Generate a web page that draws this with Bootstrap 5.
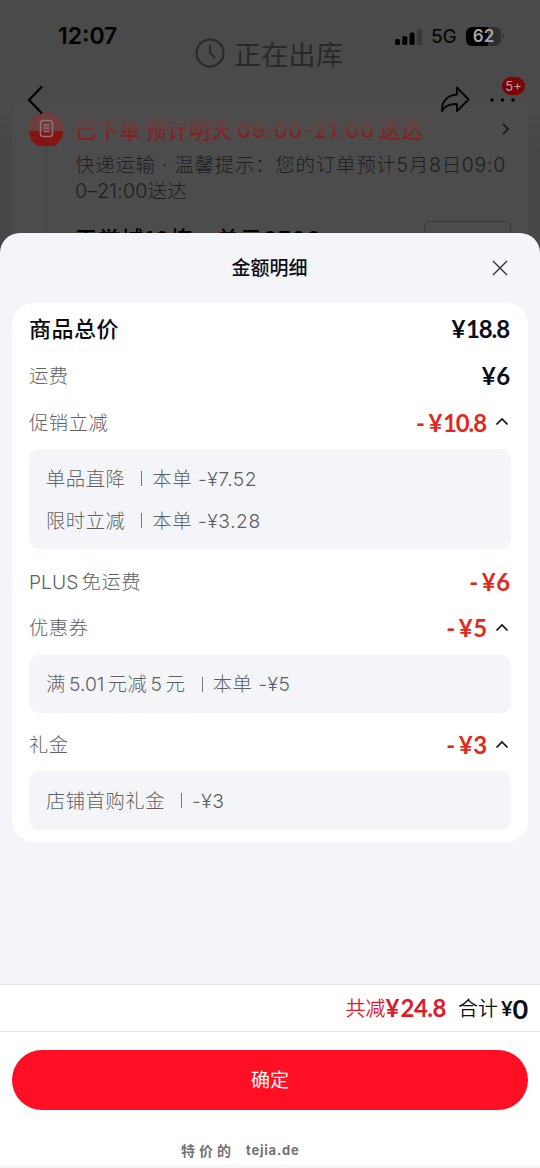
<!DOCTYPE html>
<html lang="zh-CN">
<head>
<meta charset="utf-8">
<meta name="viewport" content="width=device-width, initial-scale=1">
<title>金额明细</title>
<link href="https://cdn.jsdelivr.net/npm/bootstrap@5.3.0/dist/css/bootstrap.min.css" rel="stylesheet">
<style>
body{font-family:Inter,"Noto Sans CJK SC",sans-serif;background:#4a4a4a;color:#0b0e16;overflow:hidden}
svg{display:block;flex:none}
.screen{width:540px;height:1168px}
.t{white-space:pre;line-height:1}
.behind{height:260px;background:linear-gradient(#4a4a4a 110px,#464646 150px);overflow:hidden}
.over{z-index:2}
.clock{left:58px;top:25px;font-size:23px;font-weight:600;color:#000}
.signals{left:395px;top:26px;height:20px}
.net{font-size:19px;font-weight:500;color:#0a0a0a;margin-left:9px;width:27px;letter-spacing:-.3px}
.battery{width:35px;height:19px;border-radius:6px;background:linear-gradient(90deg,#000 64%,#303030 64%);color:#a5a5a5;font-size:17px;font-weight:600;margin-left:8px;line-height:19px}
.state{left:195px;top:38px;color:#292929;font-size:27px;font-weight:400;letter-spacing:.3px}
.state .t{padding-top:3px}
.count{left:502px;top:77px;width:23px;height:18px;background:#7d0004;color:#aaa;font-size:13px;line-height:18px}
.order{margin:97px 12px 0;height:163px;background:#4c4c4c;border-radius:16px 16px 0 0;padding:15px 16px 0 17px}
.track{width:1px;height:90px;background:#434343;margin:0 auto}
.ship{font-size:21.5px;height:34px;line-height:36px;background:linear-gradient(#703c3e 0 40%,#8a1c1f 66%);-webkit-background-clip:text;background-clip:text;color:transparent;font-weight:500;word-spacing:-2px;letter-spacing:.35px}
.ship .han{letter-spacing:.4px}
.ship .hours{letter-spacing:1px}
.info{font-size:19.5px;line-height:26px;color:#1e1e1e;font-weight:300;letter-spacing:.7px;margin-top:6px}
.info .next{letter-spacing:.2px}
.addr{font-size:22px;font-weight:500;color:#000;line-height:24px;margin-top:23px;letter-spacing:1.2px}
.choice{width:87px;height:36px;border:1px solid #383838;border-radius:6px;right:17px;top:124px}
.sheet{height:935px;margin-top:-27px;background:#f3f5f9;border-radius:20px 20px 0 0;z-index:3;overflow:hidden}
.head{height:70px;font-size:19px;font-weight:500}
.head .t{padding-top:1px;margin-right:1px}
.close-x{right:31px;top:26px}
.bill{margin:0 12px;height:539px;background:#fff;border-radius:22px;padding:0 17px}
.line{font-size:19.3px;color:#606163;font-weight:300;letter-spacing:.55px}
.line .t:not(.amt),.detail .t{padding-top:2px}
.latin{font-size:19.3px;letter-spacing:0}
.thin{letter-spacing:-2.2px}
.total{height:52px;font-size:22px;font-weight:500;color:#090b10;letter-spacing:.5px}
.amt{font-family:Lato,"Noto Sans CJK SC",sans-serif;font-weight:700;font-size:24px;letter-spacing:-1.1px;color:#0b0e18}
.amt:last-child{margin-right:2px}
.yen{margin-right:1.5px}
.off{color:#e22a1c}
.caret{margin-left:9px;margin-right:2px;margin-bottom:1px}
.detail{background:#f4f5f9;border-radius:10px;padding:0 17px;font-size:19.3px;letter-spacing:.55px;color:#606163;font-weight:300}
.detail .bar{width:1px;height:15px;background:#77787a;margin:0 10px 0 16px}
.h41{height:41px}.h42{height:41.5px}.h46{height:46px}.h52{height:52px}.h53{height:53px}
.one{height:58px}
.sum{height:48px;background:#fff;border-top:1px solid #e2e3e6;border-bottom:1px solid #e4e5e7;padding-right:11px}
.foot{height:136px;background:#fff;border-bottom:3px solid #f5f5f5;padding:18px 12px 0}
.ok{height:60px;background:#ff0f23;color:#fff;font-size:19px;border:0;line-height:62px;padding:0}
.ok:hover{background:#ff0f23;color:#fff}
.brand{margin:33px 0 0 169px;color:#737373;font-size:14px;font-weight:700}
</style>
</head>
<body>
<div class="screen position-relative">
  <div class="behind position-relative d-flex flex-column">
    <div class="over position-absolute clock t">12:07</div>
    <div class="over position-absolute signals d-flex align-items-center">
      <svg width="27" height="17" viewBox="0 0 27 17"><g fill="#000"><rect x="0" y="11" width="5" height="6" rx="1.5"/><rect x="7.3" y="8" width="5" height="9" rx="1.5"/><rect x="14.6" y="4.5" width="5" height="12.5" rx="1.5"/></g><rect x="21.9" y="1" width="5" height="16" rx="1.5" fill="#393939"/></svg>
      <span class="t net">5G</span><span class="battery text-center">62</span>
      <svg width="4" height="8" viewBox="0 0 4 8"><path d="M1.5 1.5q3 2.5 0 5z" fill="#303030"/></svg>
    </div>
    <div class="position-absolute state d-flex align-items-center gap-2">
      <svg width="31" height="31" viewBox="0 0 31 31" fill="none" stroke="#292929" stroke-width="2"><circle cx="15" cy="15" r="13.5"/><path d="M15 7.500v7.500l5 5"/></svg>
      <span class="t">正在出库</span>
    </div>
    <svg class="over position-absolute" style="left:26px;top:84px" width="20" height="32" viewBox="0 0 20 32" fill="none" stroke="#000" stroke-width="2.4"><path d="M16 2.500 3 16l13 13.500"/></svg>
    <svg class="over position-absolute" style="left:439px;top:85px" width="32" height="29" viewBox="0 0 32 29" fill="none" stroke="#050505" stroke-width="1.9" stroke-linejoin="round"><path d="M18 2.500 29.500 14.500 18 26v-7C10.500 18.500 6 20.500 3 26 2.500 17 8 10 18 9.500z"/></svg>
    <svg class="over position-absolute" style="left:489px;top:97px" width="28" height="6" viewBox="0 0 28 6" fill="#000"><circle cx="3" cy="3" r="1.8"/><circle cx="13.500" cy="3" r="1.8"/><circle cx="24" cy="3" r="1.8"/></svg>
    <div class="over position-absolute count rounded-pill text-center">5+</div>
    <div class="order d-flex position-relative">
      <div>
        <svg width="34" height="34" viewBox="0 0 34 34"><circle cx="17" cy="17" r="17" fill="#703c3e"/><path d="M0 19a17 17 0 0 0 34 0z" fill="#881315"/><rect x="11.500" y="8.500" width="12" height="16" rx="3" fill="none" stroke="#937476" stroke-width="1.5"/><path d="M14.500 13h6M14.500 16h6M14.500 19.500h6" stroke="#937476" stroke-width="1.3"/></svg>
        <div class="track"></div>
      </div>
      <div class="flex-grow-1" style="margin-left:12px">
        <div class="d-flex align-items-center justify-content-between"><span class="t ship"><span class="han">已下单 预计明天</span> <span class="hours">09:00-21:00</span> <span class="han">送达</span></span><svg width="10" height="14" viewBox="0 0 10 14" fill="none" stroke="#111" stroke-width="1.5"><path d="m1 2 5 5-5 5"/></svg></div>
        <div class="info t">快递运输 · 温馨提示：您的订单预计5月8日09:0
<span class="next">0–21:00送达</span></div>
        <div class="addr t">天誉城10栋一单元3702</div>
      </div>
      <div class="choice position-absolute"></div>
    </div>
  </div>

  <div class="sheet position-relative d-flex flex-column">
    <div class="head position-relative d-flex align-items-center justify-content-center">
      <span class="t">金额明细</span>
      <svg class="close-x position-absolute" width="18" height="18" viewBox="0 0 18 18" stroke="#333" stroke-width="1.4"><path d="m2 2 14 14M16 2 2 16"/></svg>
    </div>
    <div class="bill">
      <div class="total d-flex align-items-center justify-content-between"><span class="t">商品总价</span><span class="t amt"><span class="yen">¥</span>18.8</span></div>
      <div class="line h41 d-flex align-items-center justify-content-between"><span class="t">运费</span><span class="t amt"><span class="yen">¥</span>6</span></div>
      <div class="line h53 d-flex align-items-center"><span class="t me-auto">促销立减</span><span class="t amt off">- <span class="yen">¥</span>10.8</span><svg class="caret" width="14" height="10" viewBox="0 0 14 10" fill="none" stroke="#111" stroke-width="1.7"><path d="m1.500 7.500 5.500-5.500 5.500 5.500"/></svg></div>
      <div class="detail" style="height:100px;padding-top:9px">
        <div class="h42 d-flex align-items-center"><span class="t">单品直降</span><span class="bar"></span><span class="t">本单 -¥7.52</span></div>
        <div class="h42 d-flex align-items-center"><span class="t">限时立减</span><span class="bar"></span><span class="t">本单 -¥3.28</span></div>
      </div>
      <div class="line h46 d-flex align-items-center justify-content-between" style="margin-top:10px"><span class="t"><span class="latin">PLUS</span><span class="thin"> </span>免运费</span><span class="t amt off">- <span class="yen">¥</span>6</span></div>
      <div class="line h46 d-flex align-items-center"><span class="t me-auto">优惠券</span><span class="t amt off">- <span class="yen">¥</span>5</span><svg class="caret" width="14" height="10" viewBox="0 0 14 10" fill="none" stroke="#111" stroke-width="1.7"><path d="m1.500 7.500 5.500-5.500 5.500 5.500"/></svg></div>
      <div class="detail one d-flex align-items-center" style="margin-top:4px"><span class="t">满<span class="thin"> </span><span class="latin">5.01</span><span class="thin"> </span>元减<span class="thin"> </span>5<span class="thin"> </span>元</span><span class="bar"></span><span class="t">本单 -¥5</span></div>
      <div class="line h52 d-flex align-items-center" style="margin-top:6px"><span class="t me-auto">礼金</span><span class="t amt off">- <span class="yen">¥</span>3</span><svg class="caret" width="14" height="10" viewBox="0 0 14 10" fill="none" stroke="#111" stroke-width="1.7"><path d="m1.500 7.500 5.500-5.500 5.500 5.500"/></svg></div>
      <div class="detail one d-flex align-items-center" style="height:59px"><span class="t">店铺首购礼金</span><span class="bar"></span><span class="t">-¥3</span></div>
    </div>
    <div class="sum mt-auto d-flex align-items-center justify-content-end">
      <span class="t" style="font-size:20px;color:#dc1a2c;padding-top:1px;font-weight:350">共减</span><span class="t amt" style="color:#dc1a2c;letter-spacing:-.5px"><span class="yen">¥</span>24.8</span>
      <span class="t" style="font-size:20px;margin-left:12px;padding-top:1px;font-weight:350">合计</span><span class="t amt" style="font-size:20px;margin-left:3px">¥</span><span class="t amt" style="font-size:27px;margin-left:1px">0</span>
    </div>
    <div class="foot">
      <button class="ok btn rounded-pill w-100 d-block">确定</button>
      <div class="brand d-flex"><span class="t" style="letter-spacing:4px;padding-top:1px">特价的</span><span class="t" style="margin-left:11px;letter-spacing:.8px;font-size:13px;padding-top:1px">tejia.de</span></div>
    </div>
  </div>
</div>
<script src="https://cdn.jsdelivr.net/npm/bootstrap@5.3.0/dist/js/bootstrap.bundle.min.js"></script>
</body>
</html>
